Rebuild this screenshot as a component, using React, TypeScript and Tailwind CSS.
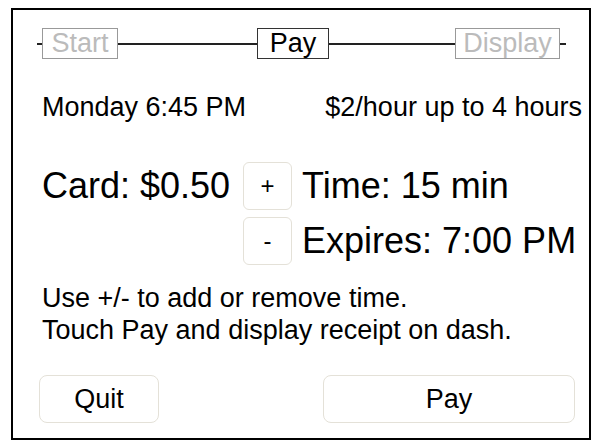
import React from 'react'

const font = { fontFamily: '"Liberation Sans", Arial, sans-serif' }

const Step = ({ label, w, active }: { label: string; w: string; active?: boolean }) => (
  <div
    className={`h-[31px] ${w} flex items-center justify-center text-[27px] leading-none border ${
      active ? 'border-[#333] text-black' : 'border-[#999] text-[#bbb]'
    }`}
  >
    {label}
  </div>
)

const Line = ({ w }: { w: string }) => <div className={`h-[2px] bg-[#222] ${w}`} />

export default function App() {
  return (
    <div className="w-[600px] h-[448px] bg-white pt-[8px] pl-[11px]" style={font}>
      <div className="w-[580px] h-[432px] border-2 border-black flex flex-col">
        {/* progress steps */}
        <div className="flex items-center ml-[24px] mt-[18px]">
          <Line w="w-[5px]" />
          <Step label="Start" w="w-[76px]" />
          <Line w="w-[139px]" />
          <Step label="Pay" w="w-[72px]" active />
          <Line w="w-[126px]" />
          <Step label="Display" w="w-[105px]" />
          <Line w="w-[6px]" />
        </div>

        <div className="flex justify-between items-center ml-[29px] mr-[7px] mt-[35px] text-[27px] leading-none text-black">
          <span>Monday 6:45 PM</span>
          <span>$2/hour up to 4 hours</span>
        </div>

        <div className="grid grid-cols-[201px_59px_auto] gap-y-[7px] items-center ml-[29px] mt-[41px] text-[36px] leading-none text-black">
          <span>Card: $0.50</span>
          <button className="h-[48px] w-[49px] rounded-md border border-[#e4e1d8] bg-white text-[24px]">+</button>
          <span>Time: 15 min</span>
          <span />
          <button className="h-[48px] w-[49px] rounded-md border border-[#e4e1d8] bg-white text-[24px]">-</button>
          <span>Expires: 7:00 PM</span>
        </div>

        <div className="ml-[29px] mt-[17px] text-[27px] leading-[32px] text-black">
          <p>Use +/- to add or remove time.</p>
          <p>Touch Pay and display receipt on dash.</p>
        </div>

        <div className="flex justify-between ml-[26px] mr-[14px] mt-[29px]">
          <button className="h-[48px] w-[120px] rounded-lg border border-[#e4e1d8] bg-white text-[27px] text-black">Quit</button>
          <button className="h-[48px] w-[252px] rounded-lg border border-[#e4e1d8] bg-white text-[27px] text-black">Pay</button>
        </div>
      </div>
    </div>
  )
}
